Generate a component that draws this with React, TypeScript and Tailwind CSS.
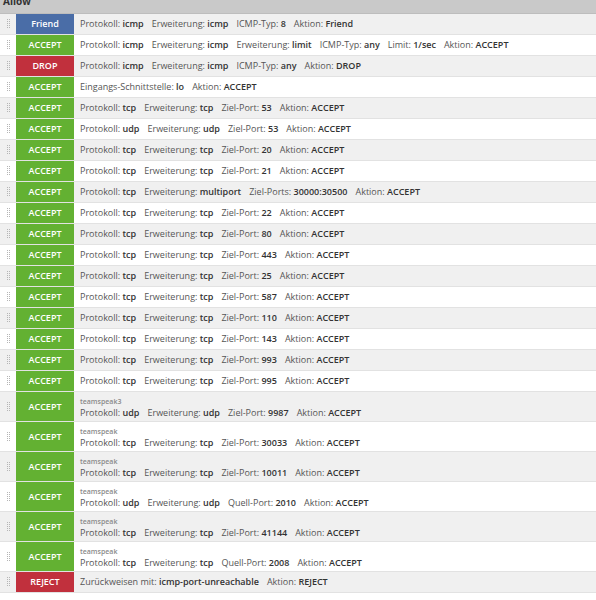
type Pair = [string, string]

type Rule = {
  action: 'Friend' | 'ACCEPT' | 'DROP' | 'REJECT'
  comment?: string
  fields: Pair[]
}

const tcp = (port: string, key = 'Ziel-Port'): Pair[] => [
  ['Protokoll', 'tcp'],
  ['Erweiterung', 'tcp'],
  [key, port],
  ['Aktion', 'ACCEPT'],
]

const udp = (port: string, key = 'Ziel-Port'): Pair[] => [
  ['Protokoll', 'udp'],
  ['Erweiterung', 'udp'],
  [key, port],
  ['Aktion', 'ACCEPT'],
]

const rules: Rule[] = [
  {
    action: 'Friend',
    fields: [
      ['Protokoll', 'icmp'],
      ['Erweiterung', 'icmp'],
      ['ICMP-Typ', '8'],
      ['Aktion', 'Friend'],
    ],
  },
  {
    action: 'ACCEPT',
    fields: [
      ['Protokoll', 'icmp'],
      ['Erweiterung', 'icmp'],
      ['Erweiterung', 'limit'],
      ['ICMP-Typ', 'any'],
      ['Limit', '1/sec'],
      ['Aktion', 'ACCEPT'],
    ],
  },
  {
    action: 'DROP',
    fields: [
      ['Protokoll', 'icmp'],
      ['Erweiterung', 'icmp'],
      ['ICMP-Typ', 'any'],
      ['Aktion', 'DROP'],
    ],
  },
  {
    action: 'ACCEPT',
    fields: [
      ['Eingangs-Schnittstelle', 'lo'],
      ['Aktion', 'ACCEPT'],
    ],
  },
  { action: 'ACCEPT', fields: tcp('53') },
  { action: 'ACCEPT', fields: udp('53') },
  { action: 'ACCEPT', fields: tcp('20') },
  { action: 'ACCEPT', fields: tcp('21') },
  {
    action: 'ACCEPT',
    fields: [
      ['Protokoll', 'tcp'],
      ['Erweiterung', 'multiport'],
      ['Ziel-Ports', '30000:30500'],
      ['Aktion', 'ACCEPT'],
    ],
  },
  { action: 'ACCEPT', fields: tcp('22') },
  { action: 'ACCEPT', fields: tcp('80') },
  { action: 'ACCEPT', fields: tcp('443') },
  { action: 'ACCEPT', fields: tcp('25') },
  { action: 'ACCEPT', fields: tcp('587') },
  { action: 'ACCEPT', fields: tcp('110') },
  { action: 'ACCEPT', fields: tcp('143') },
  { action: 'ACCEPT', fields: tcp('993') },
  { action: 'ACCEPT', fields: tcp('995') },
  { action: 'ACCEPT', comment: 'teamspeak3', fields: udp('9987') },
  { action: 'ACCEPT', comment: 'teamspeak', fields: tcp('30033') },
  { action: 'ACCEPT', comment: 'teamspeak', fields: tcp('10011') },
  { action: 'ACCEPT', comment: 'teamspeak', fields: udp('2010', 'Quell-Port') },
  { action: 'ACCEPT', comment: 'teamspeak', fields: tcp('41144') },
  { action: 'ACCEPT', comment: 'teamspeak', fields: tcp('2008', 'Quell-Port') },
  {
    action: 'REJECT',
    fields: [
      ['Zurückweisen mit', 'icmp-port-unreachable'],
      ['Aktion', 'REJECT'],
    ],
  },
]

const badgeColor: Record<Rule['action'], string> = {
  Friend: 'bg-[#4a6da7]',
  ACCEPT: 'bg-[#63b132]',
  DROP: 'bg-[#c1303d]',
  REJECT: 'bg-[#c1303d]',
}

function Grip() {
  const dots = []
  for (let y = 0; y < 5; y++) {
    dots.push(<rect key={`a${y}`} x={0} y={y * 2} width={1} height={1} />)
    dots.push(<rect key={`b${y}`} x={2} y={y * 2} width={1} height={1} />)
  }
  return (
    <svg width="3" height="10" viewBox="0 0 3 10" className="fill-[#b5b5b5]">
      {dots}
    </svg>
  )
}

function RuleRow({ rule, index }: { rule: Rule; index: number }) {
  const bg = index % 2 === 0 ? 'bg-[#f0f0f0]' : 'bg-white'
  const tall = !!rule.comment
  return (
    <div className={`flex border-b border-[#e2e2e2] ${bg} ${tall ? 'h-[30px]' : 'h-[21px]'}`}>
      <div className="w-[16px] flex items-center justify-center">
        <Grip />
      </div>
      <div
        className={`w-[58px] flex items-center justify-center text-white text-[9px] font-semibold ${badgeColor[rule.action]}`}
      >
        {rule.action}
      </div>
      <div className={`flex-1 pl-[6px] flex flex-col ${tall ? 'pt-[5px]' : 'justify-center'}`}>
        {rule.comment && (
          <div className="text-[7px] leading-[10px] font-semibold text-[#8a8a8a]">{rule.comment}</div>
        )}
        <div className="flex gap-[8px] text-[9px] leading-[12px] whitespace-nowrap">
          {rule.fields.map(([k, v], i) => (
            <span key={i} className="text-[#555]">
              {k}: <span className="font-semibold text-[#333]">{v}</span>
            </span>
          ))}
        </div>
      </div>
    </div>
  )
}

export default function App() {
  return (
    <div className="w-[596px] h-[600px] bg-white overflow-hidden font-['Open_Sans',sans-serif]">
      <div className="h-[14px] bg-[#c9c9c9] border-b border-[#bdbdbd] overflow-hidden pl-[3px]">
        <div className="-mt-[5px] text-[10px] leading-[12px] font-bold text-[#333]">Allow</div>
      </div>
      {rules.map((r, i) => (
        <RuleRow key={i} rule={r} index={i} />
      ))}
    </div>
  )
}
